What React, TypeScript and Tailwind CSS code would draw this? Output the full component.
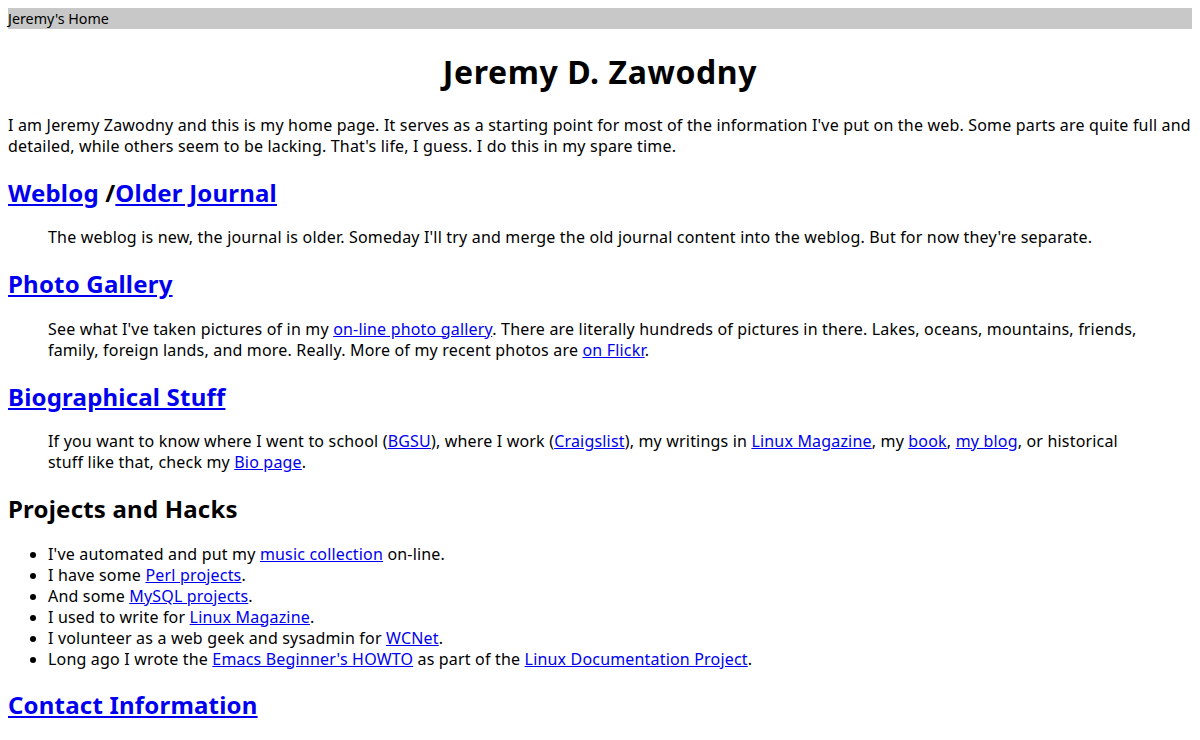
import React from 'react';

const A = ({ children }: { children: React.ReactNode }) => (
  <a href="#" className="text-[#0000ee] underline">{children}</a>
);

const H2 = ({ children }: { children: React.ReactNode }) => (
  <h2 className="text-[24px] font-bold leading-[32px] tracking-[0.2px] mt-[19.7px] mb-[18.4px]">{children}</h2>
);

const Quote = ({ children }: { children: React.ReactNode }) => (
  <blockquote className="mx-10 my-4">{children}</blockquote>
);

export default function App() {
  return (
    <div className="m-2 font-['Noto_Sans',sans-serif] text-[16px] leading-[1.33] tracking-[0.18px] text-black">
      <div className="bg-[#c8c8c8] text-[14.3px] leading-[21px] tracking-normal">Jeremy's Home</div>

      <h1 className="text-center text-[32px] font-bold leading-[1.33] tracking-[0.6px] mt-[22px] mb-[21px]">
        Jeremy D. Zawodny
      </h1>

      <p className="my-4">
        I am Jeremy Zawodny and this is my home page. It serves as a starting point for most of the
        information I've put on the web. Some parts are quite full and detailed, while others seem to be
        lacking. That's life, I guess. I do this in my spare time.
      </p>

      <H2>
        <A>Weblog</A> /<A>Older Journal</A>
      </H2>
      <Quote>
        The weblog is new, the journal is older. Someday I'll try and merge the old journal content into
        the weblog. But for now they're separate.
      </Quote>

      <H2>
        <A>Photo Gallery</A>
      </H2>
      <Quote>
        See what I've taken pictures of in my <A>on-line photo gallery</A>. There are literally hundreds of
        pictures in there. Lakes, oceans, mountains, friends, family, foreign lands, and more. Really. More
        of my recent photos are <A>on Flickr</A>.
      </Quote>

      <H2>
        <A>Biographical Stuff</A>
      </H2>
      <Quote>
        If you want to know where I went to school (<A>BGSU</A>), where I work (<A>Craigslist</A>), my
        writings in <A>Linux Magazine</A>, my <A>book</A>, <A>my blog</A>, or historical stuff like that,
        check my <A>Bio page</A>.
      </Quote>

      <H2>Projects and Hacks</H2>
      <ul className="list-disc pl-10 my-4 leading-[21px]">
        <li>I've automated and put my <A>music collection</A> on-line.</li>
        <li>I have some <A>Perl projects</A>.</li>
        <li>And some <A>MySQL projects</A>.</li>
        <li>I used to write for <A>Linux Magazine</A>.</li>
        <li>I volunteer as a web geek and sysadmin for <A>WCNet</A>.</li>
        <li>
          Long ago I wrote the <A>Emacs Beginner's HOWTO</A> as part of the <A>Linux Documentation Project</A>.
        </li>
      </ul>

      <H2>
        <A>Contact Information</A>
      </H2>
    </div>
  );
}
